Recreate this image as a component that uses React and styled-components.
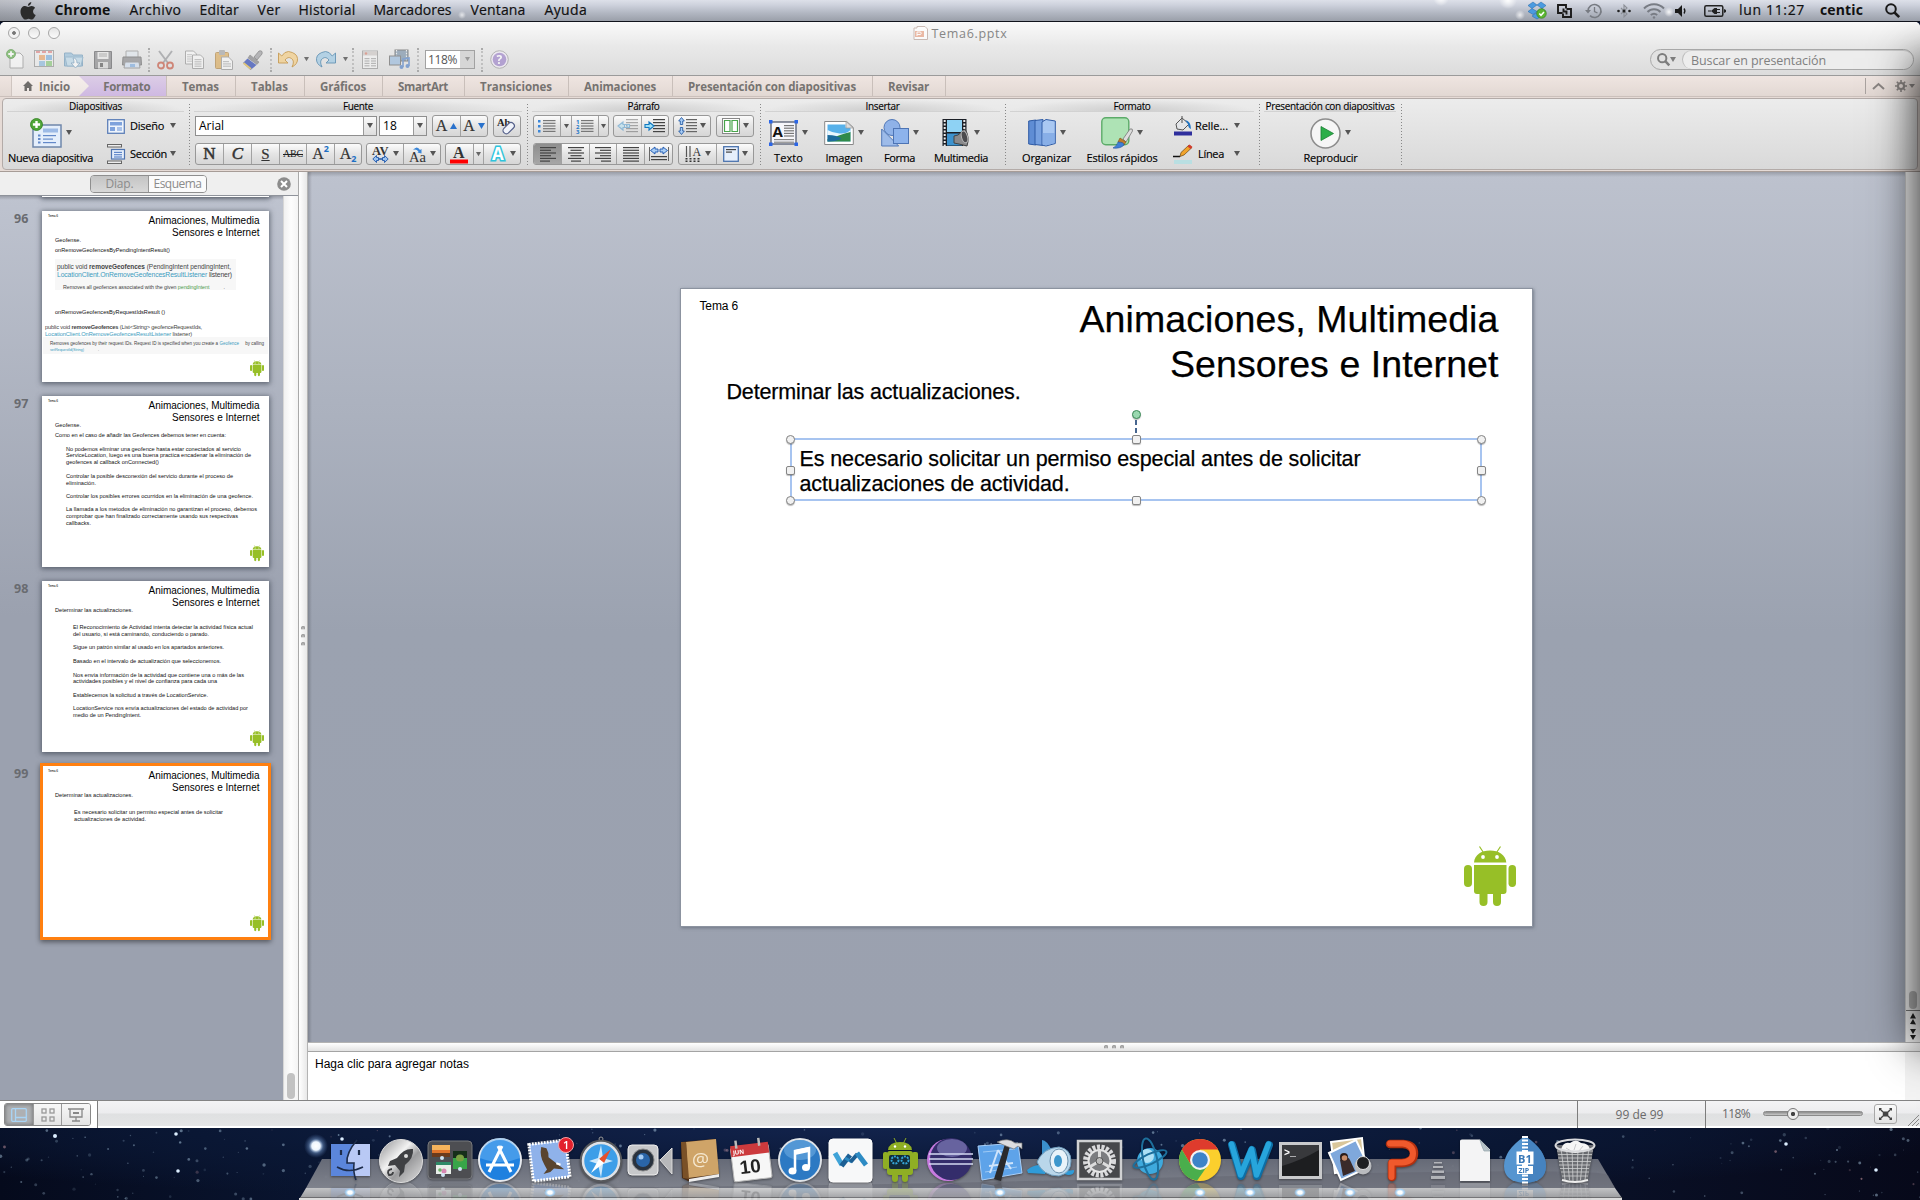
import React, { useLayoutEffect, useRef } from "react";
import styled, { createGlobalStyle, css } from "styled-components";

const UI = `"Open Sans", "Noto Sans", sans-serif`;
const ARIAL = `"Liberation Sans", Arial, sans-serif`;

const Global = createGlobalStyle`
  html, body { margin: 0; padding: 0; }
  body { width: 1920px; height: 1200px; overflow: hidden; background: #08112a; font-family: ${UI}; }
  *, *::before, *::after { box-sizing: border-box; }
  svg { display: block; flex: none; overflow: visible; }
`;

const Label = styled.span`
  display: inline-block;
  white-space: pre;
  flex: none;
`;

/* Text tracked to a given advance width. */
function Fit({ w, children, className }) {
  const ref = useRef(null);
  useLayoutEffect(() => {
    const el = ref.current;
    el.style.letterSpacing = "0px";
    const natural = el.getBoundingClientRect().width;
    el.style.letterSpacing = `${(w - natural) / el.textContent.length}px`;
  }, [w, children]);
  return <Label ref={ref} className={className}>{children}</Label>;
}

/* ---------- menu bar ---------- */
const Screen = styled.div`
  width: 1920px; height: 1200px; display: flex; flex-direction: column; overflow: hidden; position: relative;
`;
const MenuBar = styled.header`
  height: 22px; flex: none; display: flex; align-items: center; justify-content: space-between;
  border-bottom: 1px solid #10131c;
  background:
    radial-gradient(circle at 1441px -2px, #fff 0, transparent 8px),
    radial-gradient(circle at 1508px 0, #fff 0, transparent 9px),
    radial-gradient(circle at 1520px 15px, #ffffffc0 0, transparent 5px),
    radial-gradient(circle at 1669px 12px, #ffffffe0 0, transparent 5px),
    radial-gradient(circle at 462px 15px, #ffffffb0 0, transparent 4px),
    radial-gradient(circle at 165px 4px, #ffffff90 0, transparent 5px),
    linear-gradient(90deg, #60606040 0, transparent 130px),
    linear-gradient(#dde0e9 0, #cdd1dc 25%, #b3b8c3 60%, #9a9fa9 100%);
  padding: 0 20px 0 20px;
`;
const MenuGroup = styled.nav`display: flex; align-items: center; height: 21px;`;
const MenuItem = styled.div`
  font-size: 14px; line-height: 20px; color: #111; margin-left: ${(p) => p.$ml}px; padding-bottom: ${(p) => (p.$ic ? 0 : 1)}px;
  font-weight: ${(p) => (p.$bold ? 700 : 400)};
  -webkit-text-stroke: ${(p) => (p.$bold ? 0 : 0.2)}px #111;
`;

/* ---------- window chrome ---------- */
const Window = styled.main`
  height: 1106px; flex: none; display: flex; flex-direction: column; overflow: hidden;
  border-radius: 5px 5px 0 0; background: #fff; position: relative;
`;
const EdgeShadow = styled.div`
  position: absolute; left: 1920px; top: 40px; width: 300px; height: 980px;
  box-shadow: 0 0 42px 4px rgba(0, 0, 0, 0.82); pointer-events: none;
`;
const Header = styled.div`
  height: 54px; flex: none; background: linear-gradient(#fafafa, #e9e9e9 45%, #dcdcdc);
  border-bottom: 1px solid #9b9b9b; display: flex; flex-direction: column;
`;
const TitleRow = styled.div`height: 22px; display: grid; grid-template-columns: 300px 1fr 300px; align-items: center;`;
const Lights = styled.div`display: flex; gap: 8px; padding-left: 8px;`;
const Light = styled.i`
  width: 12px; height: 12px; border-radius: 50%; border: 1px solid #a6a6a6;
  background: ${(p) => (p.$dot ? "radial-gradient(circle, #777 0 1.5px, #f2f2f2 2.2px)" : "linear-gradient(#e4e4e4, #fbfbfb)")};
`;
const Title = styled.div`
  display: flex; justify-content: center; align-items: center; gap: 4px; color: #868686; font-size: 12.5px;
`;
const ToolRow = styled.div`height: 31px; display: flex; justify-content: space-between; padding-right: 6px;`;
const Tools = styled.div`display: flex; align-items: center; height: 31px;`;
const Cell = styled.div`
  width: ${(p) => p.$w}px; display: flex; justify-content: center; align-items: center; opacity: ${(p) => p.$o ?? 0.58};
`;
const Dots = styled.div`height: 24px; border-left: 2px dotted #aaa; width: 0; transform: scaleX(.6);`;
const Zoom = styled.div`
  width: 50px; height: 19px; border: 1px solid #a2a2a2; display: flex; background: #fff; color: #555;
  font-size: 12px; line-height: 17px; padding-left: 2px; justify-content: space-between; margin-left: 5px;
`;
const ZoomArrow = styled.div`width: 14px; background: #d6d6d6; display: grid; place-items: center;`;
const Search = styled.div`
  width: 264px; height: 21px; margin-top: 5px; border: 1px solid #a8a8a8; border-radius: 11px; display: flex;
  background: #e2e2e2; align-items: center; padding-left: 6px;
`;
const SearchInner = styled.div`
  margin-left: 6px; flex: 1; height: 19px; border-radius: 10px; border-left: 1px solid #bdbdbd; border-top: 1px solid #ccc;
  background: #ededed; padding-left: 8px; font-size: 12.5px; line-height: 19px; color: #808080;
`;

/* ---------- tabs ---------- */
const TabRow = styled.div`
  height: 21px; flex: none; display: flex; background: linear-gradient(#efe5e1, #e2d8d3);
  border-bottom: 1px solid #cbc0bb; padding-left: 11px; justify-content: space-between;
`;
const Tabs = styled.div`display: flex;`;
const Tab = styled.div`
  width: ${(p) => p.$w}px; height: 20px; display: flex; align-items: center; justify-content: center; gap: 6px;
  font-size: 11.5px; font-weight: 700; color: #767371; border-right: 1px solid #c9bfba;
  ${(p) => p.$kind === "home" && css`
    background: linear-gradient(#f6efec, #ece5e1); border-right: 0; border-left: 1px solid #cfc5c0; z-index: 1; justify-content: flex-start; padding-left: 11px;
    clip-path: polygon(0 0, calc(100% - 10px) 0, 100% 50%, calc(100% - 10px) 100%, 0 100%);
  `}
  ${(p) => p.$kind === "format" && css`
    background: linear-gradient(#dccde6, #cfb9e2); margin-left: -10px; padding-left: 9px;
  `}
`;
const TabTools = styled.div`
  display: flex; align-items: center; gap: 1px; border-left: 1px solid #aaa3a0; margin: 2px 5px 2px 0; padding-left: 6px;
`;

/* ---------- ribbon ---------- */
const RibbonWrap = styled.div`
  height: 75px; flex: none; background: #e6dbd6; padding: 1px 2px 1px 2px; border-bottom: 1px solid #a79c97;
`;
const Ribbon = styled.div`
  height: 72px; border: 1px solid #b3aba8; border-radius: 4px; display: flex;
  background: linear-gradient(#ececec, #d9d9d9);
`;
const Group = styled.section`
  width: ${(p) => p.$w}px; display: flex; flex-direction: column; flex: none;
  background: repeating-linear-gradient(#888 0 1px, transparent 1px 3px) right 5px / 1px 62px no-repeat;
`;
const GroupHead = styled.h2`
  margin: 0 6px 0 4px; height: 13px; font-size: 10px; line-height: 14px; font-weight: 400; color: #000; text-align: center;
  background: radial-gradient(ellipse at 50% 100%, #cccccc 0, transparent 70%);
  border-bottom: 1px solid #d2d2d2; -webkit-text-stroke: 0.1px #000;
`;
const GroupBody = styled.div`
  display: flex; flex-direction: ${(p) => (p.$rows ? "column" : "row")}; gap: ${(p) => (p.$rows ? 6 : 0)}px;
  padding: 3px 0 0 ${(p) => p.$pl ?? 0}px;
`;
const Row = styled.div`display: flex; height: 22px; align-items: center;`;
const Combo = styled.div`
  width: ${(p) => p.$w}px; height: 20px; border: 1px solid #8f8f8f; background: #fff; display: flex; justify-content: space-between;
  font-size: 12px; line-height: 18px; color: #000; padding-left: 3px; margin-right: ${(p) => p.$mr}px;
`;
const ComboArrow = styled.div`
  width: 13px; border-left: 1px solid #9a9a9a; background: linear-gradient(#fafafa, #dedede); display: grid; place-items: center;
`;
const Btns = styled.div`
  display: flex; height: 22px; border: 1px solid #989898; border-radius: 3px; margin-right: ${(p) => p.$mr ?? 4}px; overflow: hidden;
  background: linear-gradient(#fbfbfb, #e4e4e4 50%, #d6d6d6); flex: none;
`;
const Btn = styled.div`
  width: ${(p) => p.$w}px; display: flex; align-items: center; justify-content: center; gap: 3px;
  border-left: ${(p) => (p.$first ? 0 : 1)}px solid #a2a2a2;
  background: ${(p) => (p.$on ? "linear-gradient(#8e8e8e, #a6a6a6)" : "none")};
  > svg { opacity: ${(p) => (p.$dim ? 0.4 : 1)}; }
`;
const Glyph = styled.span`
  font-family: "Liberation Serif", serif; font-size: ${(p) => p.$s ?? 17}px; line-height: 20px; color: #333;
  font-style: ${(p) => (p.$i ? "italic" : "normal")};
  text-decoration: ${(p) => p.$d ?? "none"}; white-space: pre;
  -webkit-text-stroke: ${(p) => (p.$b ? 0.5 : 0.2)}px #333;
`;
const Struck = styled.span`
  font-family: "Liberation Serif", serif; font-size: 10px; line-height: 20px; color: #222;
  background: linear-gradient(#222, #222) 0 55% / 100% 1px no-repeat;
`;
const Script = styled.span`
  font-family: ${UI}; font-weight: 700; font-size: 9px; color: #1d6fc4; line-height: 10px;
  align-self: ${(p) => (p.$up ? "flex-start" : "flex-end")}; margin-left: -3px;
`;
const Big = styled.div`width: ${(p) => p.$w}px; padding-top: 1px; display: flex; flex-direction: column; align-items: center;`;
const BigIcon = styled.div`height: 34px; display: flex; align-items: center; gap: 4px;`;
const BigLabel = styled.div`font-size: 11px; line-height: 16px; color: #000; display: flex; justify-content: center; -webkit-text-stroke: 0.15px #000;`;
const Side = styled.div`display: flex; flex-direction: column; gap: 6px; padding-left: ${(p) => p.$pl}px;`;
const SideRow = styled.div`
  display: flex; height: 22px; align-items: center; font-size: 11px; color: #000; -webkit-text-stroke: 0.15px #000;
  width: ${(p) => p.$w}px; justify-content: space-between;
`;
const SideText = styled.div`flex: 1; padding-left: ${(p) => p.$pl ?? 5}px; line-height: 16px;`;

/* ---------- work area ---------- */
const Work = styled.div`height: 928px; flex: none; display: flex;`;
const Left = styled.aside`width: 299px; flex: none; display: flex; flex-direction: column; border-right: 1px solid #a9a9a9;`;
const LeftHead = styled.div`
  height: 24px; flex: none; background: #efefef; border-bottom: 1px solid #8f939b; display: flex; align-items: center; padding-left: 90px; justify-content: space-between; padding-right: 7px;
`;
const Seg = styled.div`
  display: flex; width: 117px; height: 18px; border: 1px solid #8f8f8f; border-radius: 4px; overflow: hidden; font-size: 12px; line-height: 16px; color: #8b8b8b;
`;
const SegItem = styled.div`
  flex: 1; display: flex; justify-content: center; background: ${(p) => (p.$on ? "linear-gradient(#c4c4c4, #d8d8d8)" : "#fbfbfb")};
  border-left: ${(p) => (p.$on ? 0 : 1)}px solid #999;
`;
const LeftBody = styled.div`flex: 1; display: flex; overflow: hidden;`;
const Strip = styled.div`
  width: 283px; flex: none; position: relative; overflow: hidden;
  background: linear-gradient(#00000030, transparent 4px), linear-gradient(#bec3cf, #9ba1af 420px);
`;
const Track = styled.div`
  flex: 1; border-left: 1px solid #d6d6d6; background: linear-gradient(90deg, #f0f0f0, #fdfdfd 50%, #f4f4f4);
  display: flex; flex-direction: column; justify-content: flex-end; align-items: center; padding-bottom: 1px;
`;
const TrackThumb = styled.div`width: 8px; height: ${(p) => p.$h}px; border-radius: 4px; background: ${(p) => p.$c ?? "#c2c2c2"};`;
const VSplit = styled.div`
  width: 9px; flex: none; background: linear-gradient(90deg, #fff, #e8e8e8); border-right: 1px solid #b3b3b3; display: flex; flex-direction: column;
  align-items: center; gap: 4px; padding-top: 454px;
`;
const HSplit = styled.div`
  height: 10px; flex: none; background: linear-gradient(#fff, #e3e3e3); border-top: 1px solid #b3b3b3; border-bottom: 1px solid #a4a4a4; display: flex; gap: 4px;
  justify-content: center; align-items: center;
`;
const Dot = styled.i`width: 4px; height: 4px; border-radius: 50%; background: #b2b2b2; border: 1px solid #999; border-bottom-color: #ddd;`;
const Right = styled.div`flex: 1; min-width: 0; display: flex; flex-direction: column;`;
const StageRow = styled.div`height: 870px; flex: none; display: flex;`;
const Stage = styled.div`
  width: 1597px; flex: none; padding: 117px 0 0 373px;
  background: linear-gradient(#00000030, transparent 5px), linear-gradient(90deg, #00000030, transparent 4px), linear-gradient(#bdc2ce, #9ba2b0 460px, #9ba1af);
`;
const RightTrack = styled.div`
  flex: 1; min-width: 0; background: #f1f1f1; border-left: 1px solid #ccc; display: flex; flex-direction: column; align-items: center; justify-content: flex-end;
`;
const Pagers = styled.div`margin-top: 1px; height: 32px; width: 14px; border-top: 1px solid #777; display: flex; justify-content: center;`;
const Notes = styled.div`
  flex: 1; background: #fff; font-family: ${ARIAL}; font-size: 12px; line-height: 16px; color: #000; padding: 4px 0 0 7px;
  border-right: 15px solid #f3f3f3; 
`;

/* ---------- slides ---------- */
const Slide = styled.div`
  position: relative; width: ${(p) => p.$w}px; height: ${(p) => p.$h}px; background: #fff; box-shadow: ${(p) => p.$sh}; font-family: ${ARIAL};
`;
const TextLine = styled.div`
  position: absolute; line-height: 0; white-space: pre; font-size: ${(p) => p.$s}px; left: ${(p) => p.$x}px;
  top: ${(p) => p.$y - p.$s * 0.3465}px; color: ${(p) => p.$c ?? "#000"}; height: 0;
  -webkit-text-stroke: ${(p) => (p.$s > 15 ? 0.25 : 0)}px #000;
`;
const Inline = styled.span`color: ${(p) => p.$c ?? "inherit"}; font-weight: ${(p) => (p.$b ? 700 : 400)};`;
const Shade = styled.div`
  position: absolute; left: ${(p) => p.$x}px; top: ${(p) => p.$y}px; width: ${(p) => p.$w}px; height: ${(p) => p.$h}px; background: #f7f7f7;
`;
const Selection = styled.div`
  position: absolute; left: 109px; top: 149px; width: 692px; height: 63px; border: 2px solid #a7c4f0;
`;
const Handle = styled.i`
  position: absolute; width: 9px; height: 9px; left: ${(p) => p.$x}px; top: ${(p) => p.$y}px; background: ${(p) => p.$c ?? "#f1f1f1"};
  border: 1px solid ${(p) => p.$b ?? "#858585"}; border-radius: ${(p) => (p.$round ? "50%" : "2px")}; box-shadow: 0 1px 1px #0004;
`;
const Stem = styled.i`
  position: absolute; left: 343px; top: -20px; height: 14px; width: 2px;
  background: linear-gradient(#46658f 0 5px, transparent 5px 8px, #46658f 8px 13px, transparent 13px);
`;
const BotSpot = styled.div`position: absolute; left: ${(p) => p.$x}px; top: ${(p) => p.$y}px;`;
const Thumb = styled.div`position: absolute; left: ${(p) => p.$x ?? 42}px; top: ${(p) => p.$y}px;`;
const Ring = styled.div`position: absolute; inset: -3px -2px; border: 3px solid #ff8010; box-shadow: ${(p) => (p.$sh ? "0 2px 5px #0007" : "none")};`;
const Num = styled.div`
  position: absolute; left: 14px; top: ${(p) => p.$y}px; font-size: 12.5px; line-height: 16px; font-weight: 700; color: #696b70;
`;

/* ---------- status bar ---------- */
const Status = styled.footer`
  height: 28px; flex: none; border-top: 1px solid #838383; display: flex; border-bottom: 2px solid #fff;
  background: linear-gradient(#f4f4f5, #ececee 48%, #dfe0e1 52%, #e4e5e6); color: #6a6a6a; font-size: 12px;
`;
const Views = styled.div`width: 98px; flex: none; background: #fff; border-right: 1px solid #7d7d7d; padding: 2px 0 0 4px; margin-bottom: -2px;`;
const ViewSet = styled.div`
  width: 87px; height: 23px; display: grid; grid-template-columns: 28px 28px 29px; border: 1px solid #888; border-radius: 3px; overflow: hidden;
`;
const View = styled.div`
  display: grid; place-items: center; background: ${(p) => (p.$on ? "#aeb0b3" : "linear-gradient(#f7f7f7,#e4e4e4)")};
  border-left: ${(p) => (p.$on ? 0 : 1)}px solid #999; box-shadow: ${(p) => (p.$on ? "inset 0 0 4px #666" : "none")};
`;
const Fill = styled.div`flex: 1; border-right: 1px solid #7d7d7d; margin-bottom: -2px;`;
const Count = styled.div`width: 128px; flex: none; display: grid; place-items: center; border-right: 1px solid #7d7d7d; margin-bottom: -2px; padding: 0 4px 1px 0;`;
const ZoomArea = styled.div`width: 214px; flex: none; display: flex; align-items: center; padding-left: 16px;`;
const Slider = styled.div`
  width: 100px; height: 5px; border-radius: 3px; background: linear-gradient(#8c8c8c, #c8c8c8); border: 1px solid #8a8a8a; margin-left: 13px;
  display: flex; align-items: center; padding-left: 23px;
`;
const Knob = styled.i`width: 12px; height: 12px; flex: none; border-radius: 50%; border: 1px solid #777; background: radial-gradient(circle, #444 0 1.8px, #eee 2.5px);`;
const FullBtn = styled.div`
  width: 23px; height: 20px; margin-left: 11px; border: 1px solid #a8a8a8; border-radius: 3px; background: linear-gradient(#fafafa, #e2e2e2); display: grid; place-items: center;
`;
const Grip = styled.div`margin: 14px 0 0 11px;`;

/* ---------- desktop and dock ---------- */
const Desktop = styled.div`
  height: 72px; position: relative; overflow: hidden;
  background: radial-gradient(ellipse at 45% 0, #12234c 0, #0a1734 45%, transparent 75%), linear-gradient(90deg, #050a1c, #0a1734 20%, #0a132c 75%, #07091a);
`;
const Backdrop = styled.div`position: absolute; inset: 0;`;
const Dock = styled.div`position: relative; display: flex; padding-left: 325px; height: 72px;`;
const DockItem = styled.div`
  width: ${(p) => p.$w ?? 50}px; height: 72px; display: flex; flex-direction: column; align-items: center; padding-top: 8px; position: relative;
  > svg { -webkit-box-reflect: below 0 linear-gradient(transparent 55%, rgba(0,0,0,.3)); filter: drop-shadow(0 1px 1px #0006); }
`;
const Glow = styled.i`
  position: absolute; bottom: 3px; left: 19px; width: 12px; height: 9px; border-radius: 50%;
  background: radial-gradient(ellipse, #fff 0 25%, #9fd4ffcc 50%, transparent 70%);
`;

/* ---------- drawings ---------- */
const Tri = ({ c = "#555", up, w = 6 }) => (
  <svg width={w} height={w * 0.85} viewBox="0 0 6 5"><path d={up ? "M0 5h6L3 0z" : "M0 0h6L3 5z"} fill={c} /></svg>
);
const Bot = ({ w }) => (
  <svg width={w} height={w * 60 / 52} viewBox="0 0 52 60" fill="#97bf27">
    <path d="M15.500 .5l3.600 5.500M36.500 .5l-3.600 5.500" stroke="#97bf27" strokeWidth="1.200" />
    <path d="M10 16.500C10.500 9 17 4.500 26 4.500S41.500 9 42.300 16.500z" />
    <circle cx="19" cy="11" r="1.900" fill="#fff" /><circle cx="33" cy="11" r="1.900" fill="#fff" />
    <path d="M10 19h32.500v26a3 3 0 0 1-3 3h-26.500a3 3 0 0 1-3-3z" />
    <rect x="0" y="19" width="8" height="22" rx="4" /><rect x="44.500" y="19" width="7.500" height="22" rx="3.700" />
    <path d="M15.500 46h8v10a4 4 0 0 1-8 0zM29 46h8v10a4 4 0 0 1-8 0z" />
  </svg>
);
const S = ({ w = 20, h = 20, children, ...r }) => <svg width={w} height={h} viewBox={`0 0 ${w} ${h}`} fill="none" {...r}>{children}</svg>;
const Plus = ({ x, y, r = 4 }) => (
  <g><circle cx={x} cy={y} r={r} fill="#4fa638" stroke="#2f7d1e" strokeWidth=".8" /><path d={`M${x - r * 0.6} ${y}h${r * 1.2}M${x} ${y - r * 0.6}v${r * 1.2}`} stroke="#fff" strokeWidth={r * 0.4} /></g>
);
const Lines = ({ x = 0, y = 0, ws, gap = 3, c = "#444", align = "l", full = 16 }) => (
  <g fill={c}>{ws.map((w, i) => <rect key={i} x={x + (align === "c" ? (full - w) / 2 : align === "r" ? full - w : 0)} y={y + i * gap} width={w} height="1.200" />)}</g>
);

const Apple = () => (
  <S w={16} h={18} fill="#2b2b2b"><path d="M11.300 0c.2 1.700-1.500 3.900-3.400 3.800C7.700 2.100 9.500.3 11.300 0zM8.200 5c.8 0 1.900-.9 3.500-.9 1.300 0 2.600.7 3.400 1.900-3 1.800-2.500 5.800.6 7-.7 2-2.400 4.600-3.900 4.600-1.200 0-1.700-.8-3.200-.8s-2 .8-3.200.8C3.400 17.600.5 13.700.5 9.800c0-3.700 2.300-5.700 4.500-5.700C6.600 4.100 7.400 5 8.200 5z" /></S>
);
const Dropbox = () => (
  <S w={20} h={17}><path d="M5 0L0 3.500 4 6.500 9 3zM13 0L9 3l5 3.500L18 3.500zM4 6.500L0 9.500 5 12.500l4-3zM14 6.500L9 9.500l4 3 5-3zM4.500 13.500v1L9 17l4.500-2.500v-1L9 10.500z" fill="#4b9be0" stroke="#2367a8" strokeWidth=".5" /><circle cx="13.500" cy="11.500" r="4.800" fill="#5cb531" stroke="#2e7d14" strokeWidth=".6" /><path d="M11.300 11.500l1.700 1.800 3-3.300" stroke="#fff" strokeWidth="1.500" /></S>
);
const Overlap = () => <S w={15} h={14}><path d="M9 4.500V1H1v8h4.500M9.500 5H14v8H6V9.500M6.500 4.500v3h3v3" stroke="#1a1a1a" strokeWidth="1.900" /></S>;
const ClockIc = () => <S w={17} h={16}><path d="M3 8a6.500 6.500 0 1 1 2 4.700" stroke="#777b82" strokeWidth="1.600" /><path d="M0 7h6L3 10.500z" fill="#777b82" /><path d="M9.500 4v4.500l3 1.500" stroke="#777b82" strokeWidth="1.300" /></S>;
const Bt = () => <S w={14} h={14}><path d="M4 4l6 6-3 3V1l3 3-6 6" stroke="#8b8f96" strokeWidth="1.100" /><circle cx="1.500" cy="7" r="1.300" fill="#222" /><circle cx="7" cy="7" r="1.500" fill="#222" /><circle cx="12.500" cy="7" r="1.300" fill="#222" /></S>;
const Wifi = () => <S w={22} h={16} stroke="#787c84" strokeWidth="2"><path d="M1 5.500a14 14 0 0 1 20 0M4.500 9a9 9 0 0 1 13 0M7.800 12a5 5 0 0 1 6.400 0" /><circle cx="11" cy="14.500" r="1" fill="#787c84" strokeWidth=".5" /></S>;
const Sound = () => <S w={11} h={12}><path d="M0 4h3l4-4v12L3 8H0z" fill="#1a1a1a" /><path d="M9 3.500q1.800 2.500 0 5" stroke="#1a1a1a" strokeWidth="1.300" /></S>;
const Batt = () => <S w={22} h={12}><rect x=".8" y=".8" width="18" height="10.400" rx="1.500" stroke="#222" strokeWidth="1.500" /><path d="M20 4v4l2-1V5z" fill="#222" /><path d="M4 6h3M13 4.500h3M13 7.500h3" stroke="#222" strokeWidth="1.200" /><path d="M13 3v6h-2.500L7 6l3.500-3z" fill="#222" /></S>;
const Mag = ({ s = 15, c = "#1a1a1a", sw = 2 }) => <svg width={s} height={s} viewBox="0 0 15 15" fill="none"><circle cx="6" cy="6" r="4.800" stroke={c} strokeWidth={sw} /><path d="M9.500 9.500l4.700 4.700" stroke={c} strokeWidth={sw + 0.6} /></svg>;

const PptFile = () => <S w={15} h={14} opacity=".7"><path d="M1 2h3V.5h8l2.500 2.500v10.500H1z" fill="#fff" stroke="#b9a39a" /><rect x="2" y="5" width="9" height="6" fill="#e8a184" /><path d="M4 10V6h3a1 1 0 0 1 0 2.500H4" stroke="#fff" /></S>;
const TNew = () => <S w={18}><path d="M4 3h10l3 3v12H4z" fill="#fcfcfc" stroke="#888" /><Plus x={5} y={4} r={4.500} /></S>;
const TGrid = () => <S w={20}><rect x=".5" y=".5" width="19" height="16" fill="#eee" stroke="#888" /><path d="M2 2h4M8 2h4M14 2h4" stroke="#d77" strokeWidth="2" /><rect x="5" y="5" width="6" height="5" fill="#e89a55" /><rect x="12" y="5" width="6" height="5" fill="#6aa7dc" /><rect x="5" y="11" width="6" height="5" fill="#7fb4dd" /><rect x="12" y="11" width="6" height="5" fill="#7cc36a" /></S>;
const TFolder = () => <S w={20} h={18}><path d="M.5 2h7l1.500 2h9.500v11H.5z" fill="#8db9d8" stroke="#5d8fb4" /><path d="M1 6h18l-2 9H3z" fill="#b5d6ea" stroke="#6d9dbf" /><path d="M9 7q4 0 4 5h3l-4.500 5L7 12h3q0-3-1-5z" fill="#fff" stroke="#5487ad" strokeWidth=".8" /></S>;
const TSave = () => <S w={18} h={18}><path d="M.5.5h17v17H.5z" fill="#7b7b7e" stroke="#4b4b4e" /><rect x="3.500" y="1" width="11" height="7" fill="#e9e9e9" /><path d="M5 3h8M5 5h8" stroke="#888" /><rect x="4" y="11" width="10" height="6.500" fill="#d5d5d5" /><rect x="6" y="12" width="3" height="4" fill="#444" /></S>;
const TPrint = () => <S w={20} h={18}><path d="M4 0h12v7H4z" fill="#dfe6ee" stroke="#888" /><path d="M1 6h18l.5 8H.5z" fill="#7c7c80" stroke="#555" /><path d="M3 11h14l1 6H2z" fill="#cfdff3" stroke="#777" /><rect x="8" y="13" width="5" height="3" fill="#6fa4e0" /></S>;
const TCut = () => <S w={17}><path d="M2 1l9 12M15 1L6 13" stroke="#8a8c90" strokeWidth="2" /><circle cx="4" cy="15.500" r="3" stroke="#c2452d" strokeWidth="1.800" /><circle cx="13" cy="15.500" r="3" stroke="#c2452d" strokeWidth="1.800" /></S>;
const TCopy = () => <S w={19} h={19}><path d="M.5 1h8l3 3v10H.5z" fill="#fafafa" stroke="#888" /><path d="M7.500 5h8l3 3v10.500h-11z" fill="#fafafa" stroke="#888" /><Lines x={9.500} y={9} ws={[7, 7, 7, 7]} gap={2.200} c="#aaa" /><Lines x={2} y={4} ws={[5, 5, 5, 5]} gap={2.200} c="#bbb" /></S>;
const TPaste = () => <S w={18}><rect x=".5" y="2.500" width="13" height="16" rx="1" fill="#d9a34a" stroke="#a8762a" /><rect x="4" y="0" width="6" height="5" rx="1" fill="#999" /><path d="M6.500 7h7l4 4v8.500h-11z" fill="#fafafa" stroke="#888" /><Lines x={8} y={11} ws={[6, 8, 8]} gap={2.300} c="#aaa" /></S>;
const TBrush = () => <S w={20}><path d="M11 7l5-6q4-1 3 3l-5 6z" fill="#a5a5a8" stroke="#666" strokeWidth=".7" /><path d="M7 5l9 7-2 2.500-9-6.500z" fill="#8d8d90" stroke="#666" strokeWidth=".5" /><path d="M4.500 8.500l9 6.500-6 5L0 13z" fill="#3e55b8" /><path d="M.5 13l7.500 6" stroke="#e0be5a" strokeWidth="1.800" /></S>;
const Arc = ({ flip, c, d }) => <S w={20} h={18} transform={flip ? "scale(-1,1)" : undefined}><path d="M.5 2v10H10L7 9q3-4 6.500-1.500T14 16q6-3 5.500-8.500T10.500.5Q6.500.5 3.800 5z" fill={c} stroke={d} strokeWidth=".9" /></S>;
const TForm = () => <S w={16}><rect x=".5" y="1" width="15" height="17.500" fill="#f4f4f4" stroke="#8a8a8a" /><rect x="1" y="1.500" width="14" height="4" fill="#c9c2c0" /><circle cx="4" cy="3.500" r="1.200" fill="#d56f5a" /><Lines x={2.500} y={8} ws={[5, 5, 5, 5]} gap={2.400} c="#999" /><Lines x={9} y={8} ws={[5, 5, 5, 5]} gap={2.400} c="#999" /></S>;
const TMedia = () => <S w={21}><rect x="6" y="0" width="13" height="11" fill="#69849e" stroke="#444" /><path d="M7.500 0v11M17.500 0v11" stroke="#eee" strokeWidth="1.200" strokeDasharray="1.500 1.200" /><rect x=".5" y="6" width="11" height="9" fill="#8fb5dc" stroke="#555" /><path d="M14 17V9l6-1v8" stroke="#3f74c2" strokeWidth="1.600" /><circle cx="12.500" cy="17" r="2" fill="#3f74c2" /><circle cx="18.500" cy="16" r="2" fill="#3f74c2" /></S>;

const NewSlide = () => (
  <S w={32} h={31}><rect x="3" y="7" width="28" height="22" fill="#e4eefb" stroke="#6f87ab" strokeWidth="1.500" /><rect x="13" y="10.500" width="15" height="4" fill="#9cbae6" /><Lines x={13} y={17} ws={[13, 10, 13]} gap={3.500} c="#6389c9" /><path d="M8 17.500h2.500M8 21h2.500M8 24.500h2.500" stroke="#6389c9" strokeWidth="2" /><Plus x={6.500} y={6.500} r={6} /></S>
);
const LayoutIc = () => <S w={18} h={15}><rect x=".7" y=".7" width="16.600" height="13.600" fill="#eef4fc" stroke="#5f80b8" strokeWidth="1.300" /><rect x="3" y="3" width="12" height="3.500" fill="#7ea2dc" /><rect x="3" y="8" width="5" height="4" fill="#7ea2dc" /><rect x="10" y="8" width="5" height="4" fill="#a9c2ea" /></S>;
const SectionIc = () => <S w={18} h={20}><rect x=".5" y=".5" width="14" height="2.500" fill="#eee" stroke="#666" /><rect x=".5" y="17" width="14" height="2.500" fill="#eee" stroke="#666" /><rect x="4.500" y="5.500" width="13" height="9.500" fill="#e4eefb" stroke="#4f74b0" strokeWidth="1.200" /><Lines x={7} y={7.800} ws={[8, 8, 8]} gap={2.300} c="#5f86c9" /></S>;
const Bullets = ({ num }) => (
  <S w={18} h={15}>{num ? <g fill="#2478c8" fontFamily="Open Sans" fontWeight="700" fontSize="6"><text x="0" y="4.800">1</text><text x="0" y="10">2</text><text x="0" y="15">3</text></g> : <g fill="#3a86d8"><rect width="2.500" height="2.500" y="1" /><rect width="2.500" height="2.500" y="6" /><rect width="2.500" height="2.500" y="11" /></g>}<Lines x={5} y={1} ws={[12.500, 12.500, 12.500, 12.500, 12.500]} gap={2.700} c="#777" /></S>
);
const Indent = ({ out }) => <S w={20} h={14}><Lines x={8} y={0} ws={[12, 12, 12, 12, 12]} gap={3} /><path d={out ? "M6.500 5.500v3h5v-3zM0 7l5-4v2.500h4v3H5V11z" : "M9 7L4 3v2.500H0v3h4V11z"} fill="#9fe0f7" stroke="#1278c0" strokeWidth="1.100" /></S>;
const Spacing = () => <S w={19} h={18}><path d="M3.500.5L.7 4h1.600v3.500h2.400V4h1.600zM3.500 17.500L.7 14h1.600v-3.500h2.400V14h1.600z" fill="#a9cdf5" stroke="#285fa8" strokeWidth=".9" /><Lines x={8} y={2} ws={[11, 11, 11, 11, 11]} gap={3} c="#666" /></S>;
const Columns = () => <S w={18} h={16}><rect x=".5" y=".5" width="17" height="15" fill="#fff" stroke="#888" /><path d="M2.500 2.500h5.500v11H2.500zM10 2.500h5.500v11H10z" stroke="#4aa54c" strokeWidth="1.200" /></S>;
const Align = ({ a }) => {
  const ws = a === "j" ? [16, 16, 16, 16, 16, 16] : [16, 11, 16, 11, 16, 10];
  return <S w={16} h={15}><Lines y={0} ws={ws} gap={2.700} align={a} /></S>;
};
const Distrib = () => <S w={20} h={16}><path d="M.5 1v14M19.500 1v14" stroke="#666" /><path d="M6 1L1.500 4.500 6 8V6h3V3H6zM14 1l4.500 3.500L14 8V6h-3V3h3z" fill="#a9cdf5" stroke="#1a56b0" strokeWidth=".9" /><Lines x={2} y={10} ws={[16, 16]} gap={3} /></S>;
const TextDir = () => <S w={17} h={16}><path d="M1.500 0v11M5 0v11" stroke="#555" strokeWidth="1.200" /><text x="7.500" y="10" fontFamily="Liberation Serif" fontSize="12" fill="#333">A</text><path d="M1.500 12v4M5.500 12v4M9.500 12v4M13.500 12v4" stroke="#333" strokeWidth="2" strokeDasharray="1.500 1" /></S>;
const AlignBox = () => <S w={16} h={16}><rect x=".7" y=".7" width="14.600" height="14.600" fill="#e6effc" stroke="#4b73ae" strokeWidth="1.300" /><Lines x={3} y={3} ws={[10, 6]} gap={2.500} /></S>;
const AV = () => <S w={18} h={18}><text x="0" y="9.500" fontFamily="Liberation Serif" fontSize="12.500" fontWeight="700" fill="#333">AV</text><path d="M4.500 10.500L.8 14 4.500 17.500V15.500h2v-3h-2zM12.500 10.500L16.200 14l-3.700 3.500V15.500h-2v-3h2z" fill="#9cc4f2" stroke="#1d56aa" strokeWidth=".9" /><path d="M6.500 14h4" stroke="#1d56aa" strokeWidth="1.500" /></S>;
const Aa = () => <S w={18} h={17}><text x="0" y="16" fontFamily="Liberation Serif" fontSize="14.500" fill="#333">Aa</text><path d="M4 4q4-5 7 0l1.500-1v4.500l-4-1 1-1Q7 2.500 4 4z" fill="#3a86d8" /></S>;
const TextIc = () => <S w={29} h={27}><rect x="2" y="2" width="25" height="22" fill="#f6f6fa" stroke="#555c70" strokeWidth="1.300" /><text x="3.500" y="17" fontFamily="Open Sans" fontWeight="700" fontSize="15" fill="#111">A</text><Lines x={15} y={5} ws={[10, 10, 10, 10, 10]} gap={2.600} c="#777" /><Lines x={5} y={19} ws={[20, 20]} gap={2.600} c="#888" /><g fill="#2b66e8"><rect width="3.500" height="3.500" /><rect x="25.500" width="3.500" height="3.500" /><rect y="22.500" width="3.500" height="3.500" /><rect x="25.500" y="22.500" width="3.500" height="3.500" /></g></S>;
const ImageIc = () => <S w={30} h={26}><path d="M.7 1.500h22l6.600 6v17H.7z" fill="#fff" stroke="#888" /><path d="M3.500 4.500h18v3h5V21.500h-23z" fill="#57b1ea" /><path d="M3.500 10q5 3 12 3.500T26.500 10v11.500h-23z" fill="#e9f6fd" /><path d="M26.500 12q-12 3-20 7l-3 0v2.500h23z" fill="#2f8a4a" /><path d="M3.500 15q10 0 14 4-8 3-14 2.500z" fill="#1d6b9c" /><path d="M22 1.500V8h7z" fill="#ddd" stroke="#999" strokeWidth=".7" /></S>;
const ShapeIc = () => <S w={28} h={28}><circle cx="11" cy="8.500" r="8" fill="#8fb2e8" stroke="#5279b8" /><path d="M.7 10v17h17z" fill="#9dbbe9" stroke="#5279b8" /><rect x="12.500" y="9.500" width="15" height="15" fill="#8db3ec" stroke="#4d74b4" /></S>;
const MediaIc = () => <S w={28} h={28}><rect x=".5" y="0" width="24" height="27" fill="#1b1f26" /><rect x="5" y="1" width="15" height="12" fill="#8ed2f4" /><rect x="5" y="14.500" width="15" height="12" fill="#3d93cf" /><path d="M2.700 1v26M22.300 1v26" stroke="#eee" strokeWidth="2" strokeDasharray="2 1.500" /><path d="M12 17l4-1 7-6q5 8 2 17l-8-2-5-1z" fill="#8a8a8c" stroke="#444" /><ellipse cx="22.500" cy="18" rx="3" ry="6" fill="#4b4b4e" stroke="#bbb" transform="rotate(-15 22 18)" /></S>;
const ArrangeIc = () => <S w={28} h={28}><path d="M.7 2l7-1v25l-7-1z" fill="#5f8dd4" stroke="#2f5ba5" /><path d="M7 1.500l8-1v26l-8-1z" fill="#77a1e0" stroke="#2f5ba5" /><path d="M14 3l4-2.500 9.300 1.500v22.500L18 27l-4-1z" fill="#a9c8f2" stroke="#2f5ba5" /><path d="M14.500 14h12.500v10L18 26.500l-3.500-1z" fill="#7aa4e2" opacity=".7" /></S>;
const StylesIc = () => <S w={32} h={32}><rect x=".8" y=".8" width="27" height="27" rx="4" fill="#aee3b5" stroke="#5cab69" strokeWidth="1.400" /><path d="M22 22l7-10q3-1 2.500 2L25 25z" fill="#ddd" stroke="#777" strokeWidth=".8" /><path d="M19 21l6 4-2 3-6-3z" fill="#c17d2c" stroke="#7d4b12" strokeWidth=".6" /><path d="M17 25q6 0 6 3-4 4-11 3 4-2 5-6z" fill="#3f7fd6" stroke="#24539a" strokeWidth=".6" /></S>;
const FillIc = () => <S w={19} h={20}><path d="M3 8l6-6 7 6-6 6-6-1z" fill="#e3e5e8" stroke="#555" /><path d="M9 0v7" stroke="#666" strokeWidth="1.200" /><path d="M12 4q6 1 6 9-3-1-3-5z" fill="#1f74c4" /><rect x="1" y="15.500" width="18" height="4" fill="#2f2f9d" /></S>;
const LineIc = () => <S w={20} h={20}><path d="M0 12.500h7" stroke="#111" strokeWidth="1.500" /><path d="M7 12.500l1-4L16 1l3 2.500L11 11z" fill="#f1a32b" stroke="#6b430e" strokeWidth=".7" /><path d="M14.500 2.500L16.500.5l3 2.500-2 2z" fill="#d23b2e" /><rect x="1" y="16" width="18" height="4" fill="#b9dfe2" /></S>;
const PlayIc = () => <S w={31} h={31}><circle cx="15.500" cy="15.500" r="14.500" fill="#f6f6f6" stroke="#8d8d8d" strokeWidth="1.600" /><path d="M11 8.500v14l12.500-7z" fill="#2cae4a" stroke="#1b7f32" strokeWidth=".8" /></S>;

/* stars */
const stars = (() => {
  let s = 41;
  const rnd = () => ((s = (s * 16807) % 2147483647) / 2147483647);
  return Array.from({ length: 330 }, () => ({ x: rnd() * 1920, y: rnd() * 72, r: 0.5 + rnd() * 1.2, o: 0.12 + rnd() * 0.42, c: rnd() > 0.9 ? "#e0a8b0" : "#a9c6dd" }));
})();
const Sky = () => (
  <svg width="1920" height="72" viewBox="0 0 1920 72">
    <defs>
      <linearGradient id="shelf" x1="0" y1="0" x2="0" y2="1"><stop offset="0" stopColor="#6a6e7a" /><stop offset="1" stopColor="#858891" /></linearGradient>
      <linearGradient id="lip" x1="0" y1="0" x2="0" y2="1"><stop offset="0" stopColor="#c2c3c5" /><stop offset="1" stopColor="#9b9c9f" /></linearGradient>
      <radialGradient id="flare"><stop offset="0" stopColor="#fff" /><stop offset=".35" stopColor="#eef6ff" /><stop offset=".6" stopColor="#8fb8ee" stopOpacity=".4" /><stop offset="1" stopColor="#5c86c8" stopOpacity="0" /></radialGradient>
    </defs>
    {stars.map((p, i) => <circle key={i} cx={p.x} cy={p.y} r={p.r} fill={p.c} opacity={p.o} />)}
    <circle cx="316" cy="18" r="12" fill="url(#flare)" />
    <g fill="#dceeff"><circle cx="55" cy="8" r="2" /><circle cx="176" cy="6" r="1.800" /><circle cx="178" cy="43" r="1.800" /><circle cx="342" cy="11" r="1.800" /><circle cx="1786" cy="16" r="1.800" /><circle cx="1876" cy="42" r="1.800" /></g>
    <path d="M322 31H1598L1615 60H306z" fill="url(#shelf)" opacity=".95" />
    <path d="M306 60Q700 62 1150 50T1608 47L1615 60z" fill="#5f626c" opacity=".45" />
    <path d="M306 60H1615L1622 70H300z" fill="url(#lip)" />
    <path d="M299 70H1622V72H299z" fill="#dcdcdc" /><path d="M300 69.500H1622" stroke="#6d6d70" />
  </svg>
);

/* dock icons are drawn in a 46x46 box */
const D = ({ children }) => <svg width="46" height="46" viewBox="0 0 46 46" fill="none">{children}</svg>;
const dock = [
  { glow: true, el: <D><rect x="4" y="8" width="39" height="32" fill="#b9c9f5" /><path d="M4 8h22q-7 12-5 19h5l1 13H4z" fill="#5b86dc" /><path d="M30 4Q19 17 20 27h7q-1 10 2 17M10 31q12 7 26 0" stroke="#1d2c4a" strokeWidth="1.600" /><path d="M14 14v5M32 14v5" stroke="#1d2c4a" strokeWidth="2.200" /></D> },
  { el: <D><defs><linearGradient id="mt" x1="0" y1="0" x2="1" y2="1"><stop offset="0" stopColor="#8e8e90" /><stop offset=".4" stopColor="#f2f2f2" /><stop offset=".6" stopColor="#9b9b9d" /><stop offset="1" stopColor="#e3e3e3" /></linearGradient></defs><circle cx="24" cy="25" r="21.500" fill="url(#mt)" stroke="#ddd" /><path d="M36 13q-9-1-16 9l-7 3-2 5 7-1 5 6-1 6 5-5 1-7q9-7 8-16z" fill="#3f4043" /><circle cx="29" cy="20" r="2" fill="#ddd" /><path d="M15 33q-6 1-3 6 4 0 4-3" stroke="#3f4043" strokeWidth="1.800" /></D> },
  { el: <D><rect x="1" y="5" width="44" height="38" rx="4" fill="#4d4e52" stroke="#77787c" /><rect x="5" y="9" width="18" height="12" fill="#f6b45c" /><path d="M5 14h18v3H5z" fill="#e2762c" /><path d="M5 17h18v4H5z" fill="#6b3b1d" /><rect x="26" y="15" width="14" height="18" fill="#38a549" /><path d="M26 15h14v7H26z" fill="#162f1a" /><ellipse cx="33" cy="22" rx="4" ry="3.500" fill="#7ba043" /><rect x="9" y="26" width="15" height="12" fill="#e9efe9" /><path d="M9 26h15v3H9z" fill="#2f8a68" /><circle cx="17" cy="35" r="2.500" fill="#d889b3" /><circle cx="13" cy="34" r="1.800" fill="#6fb06a" /><g fill="#cfe3f2"><circle cx="15" cy="22" r="2" /><circle cx="33" cy="33" r="2" /><circle cx="16" cy="39" r="2" /></g></D> },
  { el: <D><circle cx="23" cy="24" r="21" fill="#1f80df" stroke="#e6e9ee" strokeWidth="2" /><path d="M3 22a20 20 0 0 1 40 0q-20 8-40 0z" fill="#6cb6f5" opacity=".5" /><path d="M25 10L12 36M21 10l13 26M9 29h28" stroke="#fff" strokeWidth="3" /></D> },
  { glow: true, el: <D><g transform="rotate(-7 23 25)"><rect x="4" y="6" width="37" height="37" fill="#8fb2ea" stroke="#fff" strokeWidth="3" strokeDasharray="2 1" /><path d="M16 10l5 2q2 5 1 9l7 7 7 7-5-1-5-1-4 3-7 1 4-4-2-5q-4-9-1-18z" fill="#59442f" /><path d="M29 28l4 2" stroke="#fff" strokeWidth="2" /></g><circle cx="39" cy="9" r="7.500" fill="#e3202c" stroke="#f6a1a5" /><text x="36" y="13" fontFamily="Open Sans" fontSize="11" fontWeight="600" fill="#fff">1</text></D> },
  { el: <D><circle cx="24" cy="3" r="2" stroke="#999" /><circle cx="24" cy="25" r="20" fill="#3d9ee8" stroke="#57595d" strokeWidth="2.500" /><circle cx="24" cy="25" r="18" stroke="#dfe2e6" strokeWidth="2.500" /><path d="M24 9l2 13 10 3-10 3-2 14-3-14-9-3 9-3z" fill="#cfe9fb" /><path d="M34 13l-7 14-5-4z" fill="#e8502b" /><path d="M14 37l8-14 5 4z" fill="#fff" /></D> },
  { el: <D><rect x="1" y="9" width="30" height="30" rx="4" fill="#c7c8ca" stroke="#eee" /><path d="M33 24l12-12v26z" fill="#b7b8ba" stroke="#ddd" /><circle cx="16" cy="24" r="11" fill="#29323e" stroke="#888" /><circle cx="16" cy="24" r="7" fill="#2a65a8" /><circle cx="14" cy="21" r="2.500" fill="#a7cdf3" /></D> },
  { el: <D><path d="M4 6l34-3 4 36-31 6-6-3z" fill="#4a2d16" /><path d="M9 6l30-3 3 35-31 4z" fill="#cfa468" /><path d="M4 6l5 0 3 37-6-1z" fill="#7a5127" /><path d="M12 43l30-5v3l-30 5z" fill="#eee" /><text x="15" y="30" fontFamily="Open Sans" fontSize="19" fill="#f5e8d0">@</text></D> },
  { el: <D><g transform="rotate(-7 23 25)"><rect x="5" y="10" width="38" height="34" rx="2" fill="#f7f7f7" stroke="#bbb" /><path d="M5 8h38v11H5z" fill="#cc3a3d" /><text x="7" y="17" fontFamily="Open Sans" fontSize="6" fontWeight="700" fill="#fff">JUN</text><text x="12" y="37" fontFamily="Liberation Sans" fontSize="19" fontWeight="700" fill="#222">10</text><path d="M11 3v8M34 3v8" stroke="#bbb" strokeWidth="2.500" /></g></D> },
  { el: <D><circle cx="23" cy="24" r="21" fill="#2c79c3" stroke="#dfe3e8" strokeWidth="2" /><ellipse cx="23" cy="14" rx="16" ry="10" fill="#8ec6f0" opacity=".4" /><path d="M18 35V15l14-3v19" stroke="#fff" strokeWidth="2.500" /><ellipse cx="15.500" cy="35" rx="4" ry="3.500" fill="#fff" /><ellipse cx="29" cy="31.500" rx="4" ry="3.500" fill="#fff" /><path d="M18 14l14-3v5l-14 3z" fill="#fff" /></D> },
  { el: <D><rect x="2" y="3" width="43" height="43" rx="4" fill="#f7f8f9" stroke="#fff" /><path d="M8 17l7 12" stroke="#3fa3d8" strokeWidth="5" /><path d="M14.500 30L23 19" stroke="#1c5f94" strokeWidth="5" /><path d="M18 22l7 4" stroke="#2d8bc4" strokeWidth="3" /><path d="M23.500 26l7-8" stroke="#1c5f94" strokeWidth="4" /><path d="M30 17l9 12" stroke="#2d8bc4" strokeWidth="5" /></D> },
  { el: <D><g fill="#8fae24"><path d="M11 14q1-8 12-8t12 8z" /><path d="M17 2l3 6M29 2l-3 6" stroke="#8fae24" /><rect x="10" y="15" width="26" height="24" rx="3" /><rect x="6" y="16" width="5" height="17" rx="2" /><rect x="35" y="16" width="6" height="17" rx="2" /><rect x="15" y="37" width="6" height="9" rx="3" /><rect x="25" y="37" width="6" height="9" rx="3" /></g><rect x="12" y="19" width="21" height="14" rx="2" fill="#122b38" /><circle cx="18" cy="24" r="3.500" stroke="#35a6d8" strokeWidth="2" strokeDasharray="2 1" /><circle cx="28" cy="24" r="3.500" stroke="#35a6d8" strokeWidth="2" strokeDasharray="2 1" /><circle cx="18" cy="10.500" r="1.200" fill="#fff" /><circle cx="28" cy="10.500" r="1.200" fill="#fff" /></D> },
  { el: <D><circle cx="21" cy="24" r="21" fill="#c77be0" /><circle cx="24" cy="23" r="21" fill="#342d6b" /><ellipse cx="25" cy="12" rx="15" ry="9" fill="#7d7bb5" opacity=".7" /><path d="M2 18h44M2 23h44M2 28h44" stroke="#d3d9f2" strokeWidth="1.700" /></D> },
  { glow: true, el: <D><path d="M1 10l40-3 4 30-40 7z" fill="#5ea3e9" stroke="#a9cff8" /><path d="M6 16l32-3M8 36l32-5" stroke="#9fcaf5" /><path d="M21 14L13 37M21 14l13 19M12 30l24-3" stroke="#cfe4fb" strokeWidth="2" /><path d="M28 8l5 2-9 35-7-2z" fill="#2a2a2c" /><path d="M20 6q11-5 18 1l7 0v6l-4-3-4 3-8-3z" fill="#dcdde0" stroke="#777" strokeWidth=".7" /></D> },
  { el: <D><path d="M15 20V4q5 0 10 11z" fill="#3a90cc" /><path d="M0 34q10-8 22-3l-4 7-17-1z" fill="#2f9bd8" /><path d="M30 36l17-2q1 5-6 5z" fill="#2f9bd8" /><path d="M10 26q6-14 22-15 12 2 12 14t-12 15Q16 40 10 26z" fill="#b9d6ea" stroke="#6f9cbd" /><ellipse cx="32" cy="25" rx="9" ry="12" fill="#e9f3fa" stroke="#6a8fab" /><ellipse cx="31" cy="25" rx="4" ry="6" fill="#3e97cd" /></D> },
  { el: <D><rect x="1" y="5" width="43" height="38" fill="#47484b" stroke="#d0d1d3" strokeWidth="2.500" /><circle cx="22.500" cy="25" r="14" stroke="#d9d9db" strokeWidth="5" strokeDasharray="3 1.500" /><circle cx="22.500" cy="25" r="11" fill="#7c7d80" stroke="#e6e6e6" strokeWidth="2" /><path d="M22.500 25V14M22.500 25l10 6M22.500 25l-10 6" stroke="#ddd" strokeWidth="3" /><circle cx="22.500" cy="25" r="3.500" fill="#bbb" stroke="#555" /></D> },
  { el: <D><circle cx="23" cy="25" r="13" fill="#3ea9dd" /><circle cx="20" cy="20" r="7" fill="#c9eefb" opacity=".8" /><g stroke="#1d6f9c" strokeWidth="2"><ellipse cx="23" cy="23" rx="18" ry="5" transform="rotate(-25 23 23)" /><ellipse cx="23" cy="23" rx="7" ry="21" transform="rotate(-12 23 23)" /></g></D> },
  { glow: true, el: <D><circle cx="23" cy="24" r="21" fill="#fbcf2d" /><path d="M4.800 13.500A21 21 0 0 1 41.200 13.500H23L14 29z" fill="#de3b2d" /><path d="M4.800 13.500A21 21 0 0 0 20 44.800L31 29H14z" fill="#4aae4c" /><circle cx="23" cy="24" r="10" fill="#f3f3f3" /><circle cx="23" cy="24" r="7.800" fill="#3d83c8" /></D> },
  { glow: true, el: <D><path d="M5 9l9 31L25 14l5 26L42 9" stroke="#0d6ea5" strokeWidth="8" strokeLinejoin="round" strokeLinecap="round" /><path d="M4.500 8l9 31L24.500 13l5 26L41.500 8" stroke="#27a5dc" strokeWidth="5.500" strokeLinejoin="round" strokeLinecap="round" /></D> },
  { glow: true, el: <D><rect x="2" y="6" width="43" height="37" fill="#c9cacc" /><rect x="5" y="9" width="37" height="31" fill="#1d1e20" /><path d="M5 30q20-6 37-16V9H5z" fill="#38393c" /><text x="7" y="20" fontFamily="Liberation Mono" fontSize="10" fontWeight="700" fill="#fff">&gt;_</text></D> },
  { glow: true, el: <D><path d="M4 6l31-4 3 30-30 5z" fill="#d9c69a" stroke="#fff" strokeWidth="2" /><path d="M2 17l27-13 13 27-28 13z" fill="#7fa8dc" stroke="#fff" strokeWidth="2" /><path d="M13 24q6-7 10 0l5 11-12 5z" fill="#3a2a2a" /><circle cx="17" cy="21" r="4" fill="#2a1c1a" /><circle cx="17.500" cy="22" r="2.800" fill="#c88d6a" /><circle cx="36" cy="30" r="8.500" fill="#b9bbbf" /><circle cx="36" cy="27" r="6.500" fill="#1e1f22" stroke="#ddd" /></D> },
  { glow: true, el: <D><path d="M15 41V27h10q12-1 12-9.500T26 8H13" stroke="#b3300f" strokeWidth="8.500" strokeLinejoin="round" strokeLinecap="round" /><path d="M14.500 41V26.500h10Q36 26 36 17.500T26 7.500H13" stroke="#f0592c" strokeWidth="6" strokeLinejoin="round" strokeLinecap="round" /></D> },
  { w: 25, el: <svg width="20" height="46" viewBox="0 0 20 46"><g fill="#c9cacd" opacity=".8"><rect x="6" y="26" width="8" height="1.500" /><rect x="5" y="30" width="10" height="2" /><rect x="4" y="34.500" width="12" height="2.500" /><rect x="3" y="40" width="14" height="3" /></g></svg> },
  { el: <D><path d="M8 5q0-2 3-1.500h17l10 10V45H8z" fill="#f4f4f5" /><path d="M28 4l10 11h-6q-2-4-4-11z" fill="#b9c4c9" stroke="#8fa0a8" strokeWidth=".7" /></D> },
  { el: <D><path d="M23 0q21 14 21 30T23 47Q2 46 2 30T23 0z" fill="#5595d0" /><path d="M23 0q21 14 21 30T23 47z" fill="#3c78b5" opacity=".6" /><path d="M23 0v48" stroke="#fff" strokeWidth="6" strokeDasharray="2 1.500" /><rect x="15" y="16" width="16" height="12" fill="#fff" stroke="#fff" /><rect x="15" y="30" width="16" height="8" fill="#fff" /><text x="16" y="26.500" fontFamily="Open Sans" fontWeight="700" fontSize="11" fill="#3878b8">B1</text><text x="16.500" y="37" fontFamily="Open Sans" fontWeight="700" fontSize="7" fill="#3878b8">ZIP</text></D> },
  { el: <D><path d="M4 9l6 35q13 4 26 0l6-35z" fill="#6f7175" opacity=".95" /><path d="M5 15h36M6 18.500h34M6 22h34M7 25.500h32M7 29h31M8 32.500h29M9 36h28M10 40h26M9 12l4 32M14.500 12l3 32M20 12l1 33M26 12l-1 33M31.500 12l-3 32M37 12l-4 32" stroke="#cfd0d2" strokeWidth=".8" /><path d="M9 14q2-9 9-7 6-5 11 0 8 0 9 7-15 6-29 0z" fill="#f6f6f6" /><path d="M14 12l5 3M24 8l-2 6M31 10l-4 5" stroke="#c9c9cc" /><ellipse cx="23" cy="9.500" rx="19.500" ry="6" stroke="#d9dadd" strokeWidth="2" /><path d="M10 44q13 4 26 0" stroke="#eee" strokeWidth="2" /></D> },
];

/* ---------- thumbnails ---------- */
const blue = "#3d9cc0";
const loc = <><Inline $c={blue}>LocationClient.OnRemoveGeofencesResultListener</Inline> listener)</>;
const thumbs = [
  { n: 96, shades: [[13, 48, 181, 31], [1, 126, 225, 17]], lines: [
    [13, 30.500, 26, "Geofense."], [13, 41, 115, "onRemoveGeofencesByPendingIntentResult()"],
    [15, 58, 174, <>public void <Inline $b>removeGeofences</Inline> (PendingIntent pendingIntent,</>, 6.500, "#444"],
    [15, 66, 175, loc, 6.800, "#444"],
    [21, 78, 162, <>Removes all geofences associated with the given <Inline $c="#4a9a4a">pendingIntent</Inline>          .</>, 5.300, "#444"],
    [13, 102.500, 110, "onRemoveGeofencesByRequestIdsResult ()"],
    [3, 118, 157, <>public void <Inline $b>removeGeofences</Inline> {"(List<String> geofenceRequestIds,"}</>, 5.700, "#444"],
    [3, 124.500, 147, loc, 5.700, "#444"],
    [8, 134.500, 214, <>Removes geofences by their request IDs. Request ID is specified when you create a <Inline $c={blue}>Geofence</Inline>     by calling</>, 4.500, "#444"],
    [8, 140.500, 49, <><Inline $c={blue}>setRequestId(String)</Inline>              .</>, 3.800, "#444"],
  ] },
  { n: 97, lines: [
    [13, 30.500, 26, "Geofense."], [13, 41, 171, "Como en el caso de añadir las Geofences debemos tener en cuenta:"],
    [24, 54.500, 175, "No podemos eliminar una geofence hasta estar conectados al servicio"], [24, 61, 185, "ServiceLocation, luego es una buena practica encadenar la eliminación de"], [24, 68, 93, "geofences al callback onConnected()"],
    [24, 81.500, 167, "Controlar la posible desconexión del servicio durante el proceso de"], [24, 88.500, 30, "eliminación."],
    [24, 102, 187, "Controlar los posibles errores ocurridos en la eliminación de una geofence."],
    [24, 115, 191, "La llamada a los metodos de eliminación no garantizan el proceso, debemos"], [24, 122, 172, "comprobar que han finalizado correctamente usando sus respectivas"], [24, 128.500, 25, "callbacks."],
  ] },
  { n: 98, lines: [
    [13, 30.500, 78, "Determinar las actualizaciones."],
    [31, 48, 180, "El Reconocimiento de Actividad intenta detectar la actividad física actual"], [31, 54.500, 136, "del usuario, si está caminando, conduciendo o parado."],
    [31, 68, 151, "Sigue un patrón similar al usado en los apartados anteriores."], [31, 81.500, 148, "Basado en el intervalo de actualización que seleccionemos."],
    [31, 95.500, 171, "Nos envía información de la actividad que contiene una o más de las"], [31, 102, 144, "actividades posibles y el nivel de confianza para cada una"],
    [31, 115.500, 135, "Establecemos la solicitud a través de LocationService."],
    [31, 129, 175, "LocationService nos envía actualizaciones del estado de actividad por"], [31, 136, 68, "medio de un PendingIntent."],
  ] },
  { n: 99, on: true, lines: [
    [13, 30.500, 78, "Determinar las actualizaciones."], [32, 48, 149, "Es necesario solicitar un permiso especial antes de solicitar"], [32, 54.500, 72, "actualizaciones de actividad."],
  ] },
];

const L = ({ x, y, w, s, c, children }) => <TextLine $x={x} $y={y} $s={s} $c={c}><Fit w={w}>{children}</Fit></TextLine>;

function ThumbSlide({ t, i }) {
  const y = 15 + i * 185;
  return (
    <>
      <Num $y={y}><Fit w={14.500}>{String(t.n)}</Fit></Num>
      <Thumb $y={y}>
        {t.on && <Ring $sh />}
        <Slide $w={227} $h={171} $sh={t.on ? "none" : "0 1px 5px 1px #3c4250b0"}>
          {(t.shades || []).map((s, k) => <Shade key={k} $x={s[0]} $y={s[1]} $w={s[2]} $h={s[3]} />)}
          <L x={6} y={6.500} w={10} s={3.300}>Tema 6</L>
          <L x={106.500} y={13} w={111} s={10}>Animaciones, Multimedia</L>
          <L x={130} y={25} w={87.500} s={10}>Sensores e Internet</L>
          {t.lines.map((l, k) => <L key={k} x={l[0]} y={l[1]} w={l[2]} s={l[4] ?? 5.600} c={l[5] ?? "#111"}>{l[3]}</L>)}
          <BotSpot $x={208} $y={149}><Bot w={14} /></BotSpot>
          {t.on && <Ring />}
        </Slide>
      </Thumb>
    </>
  );
}

const tabs = [["Temas", 69, 37], ["Tablas", 69, 37], ["Gráficos", 78, 46], ["SmartArt", 82, 50], ["Transiciones", 104, 72], ["Animaciones", 104, 72], ["Presentación con diapositivas", 200, 168], ["Revisar", 73, 41]];
const BigButton = ({ w, icon, label, lw }) => (
  <Big $w={w}><BigIcon>{icon}<Tri /></BigIcon><BigLabel><Fit w={lw}>{label}</Fit></BigLabel></Big>
);

export default function App() {
  return (
    <Screen>
      <Global />
      <MenuBar>
        <MenuGroup>
          <Apple />
          <MenuItem $bold $ml={18.500}><Fit w={56}>Chrome</Fit></MenuItem>
          <MenuItem $ml={19}><Fit w={52}>Archivo</Fit></MenuItem>
          <MenuItem $ml={18}><Fit w={39.500}>Editar</Fit></MenuItem>
          <MenuItem $ml={18.500}><Fit w={23}>Ver</Fit></MenuItem>
          <MenuItem $ml={18}><Fit w={57}>Historial</Fit></MenuItem>
          <MenuItem $ml={18}><Fit w={78}>Marcadores</Fit></MenuItem>
          <MenuItem $ml={19}><Fit w={55}>Ventana</Fit></MenuItem>
          <MenuItem $ml={19}><Fit w={42.500}>Ayuda</Fit></MenuItem>
        </MenuGroup>
        <MenuGroup>
          <Dropbox />
          <MenuItem $ic $ml={9}><Overlap /></MenuItem>
          <MenuItem $ic $ml={13}><ClockIc /></MenuItem>
          <MenuItem $ic $ml={15}><Bt /></MenuItem>
          <MenuItem $ic $ml={12}><Wifi /></MenuItem>
          <MenuItem $ic $ml={10}><Sound /></MenuItem>
          <MenuItem $ic $ml={18}><Batt /></MenuItem>
          <MenuItem $ml={13}><Fit w={66}>lun 11:27</Fit></MenuItem>
          <MenuItem $bold $ml={15}><Fit w={43}>centic</Fit></MenuItem>
          <MenuItem $ic $ml={22}><Mag /></MenuItem>
        </MenuGroup>
      </MenuBar>

      <Window>
        <Header>
          <TitleRow>
            <Lights><Light $dot /><Light /><Light /></Lights>
            <Title><PptFile /><Fit w={76}>Tema6.pptx</Fit></Title>
          </TitleRow>
          <ToolRow>
            <Tools>
              <Cell $w={29}><TNew /></Cell><Cell $w={30}><TGrid /></Cell><Cell $w={29}><TFolder /></Cell><Cell $w={29}><TSave /></Cell><Cell $w={29}><TPrint /></Cell>
              <Cell $w={6} $o={1}><Dots /></Cell>
              <Cell $w={27}><TCut /></Cell><Cell $w={30}><TCopy /></Cell><Cell $w={30}><TPaste /></Cell><Cell $w={28} $o={0.75}><TBrush /></Cell>
              <Cell $w={8} $o={1}><Dots /></Cell>
              <Cell $w={26} $o={0.75}><Arc c="#f3cf8c" d="#bd8428" /></Cell><Cell $w={10} $o={0.8}><Tri w={5} /></Cell>
              <Cell $w={30} $o={0.75}><Arc flip c="#a3cbe4" d="#3d7aa5" /></Cell><Cell $w={8} $o={0.8}><Tri w={5} /></Cell>
              <Cell $w={8} $o={1}><Dots /></Cell>
              <Cell $w={26}><TForm /></Cell><Cell $w={32}><TMedia /></Cell>
              <Cell $w={5} $o={1}><Dots /></Cell>
              <Zoom><Fit w={29}>118%</Fit><ZoomArrow><Tri c="#999" w={5} /></ZoomArrow></Zoom>
              <Cell $w={14} $o={1}><Dots /></Cell>
              <Cell $w={20} $o={0.65}><S w={19} h={19}><circle cx="9.500" cy="9.500" r="8.800" fill="#f0eaf6" stroke="#999" /><circle cx="9.500" cy="9.500" r="6.800" fill="#9a7fc8" /><text x="6.500" y="14" fontFamily="Open Sans" fontSize="12" fontWeight="700" fill="#fff">?</text></S></Cell>
            </Tools>
            <Search><Mag s={13} c="#7d7d7d" sw={2.300} /><Tri c="#7d7d7d" /><SearchInner><Fit w={135}>Buscar en presentación</Fit></SearchInner></Search>
          </ToolRow>
        </Header>

        <TabRow>
          <Tabs>
            <Tab $w={78} $kind="home"><svg width="10" height="10" viewBox="0 0 10 10" fill="#6f6c6a"><path d="M5 0L0 5h1.500v5h2.500V7h2v3h2.500V5H10z" /></svg><Fit w={31}>Inicio</Fit></Tab>
            <Tab $w={87.500} $kind="format"><Fit w={47}>Formato</Fit></Tab>
            {tabs.map(([t, w, tw]) => <Tab key={t} $w={w}><Fit w={tw}>{t}</Fit></Tab>)}
          </Tabs>
          <TabTools>
            <S w={13} h={8}><path d="M1 7l5.500-5L12 7" stroke="#8a8583" strokeWidth="2" /></S>
            <S w={29} h={12}><circle cx="15" cy="6" r="3.200" stroke="#8a8583" strokeWidth="1.800" /><path d="M15 0v12M9 6h12M10.800 1.800l8.400 8.400M19.200 1.800l-8.400 8.400" stroke="#8a8583" strokeWidth="1.600" /><circle cx="15" cy="6" r="2" fill="#e9dfdb" /><path d="M23 4h6l-3 4z" fill="#8a8583" /></S>
          </TabTools>
        </TabRow>

        <RibbonWrap>
          <Ribbon>
            <Group $w={187}>
              <GroupHead><Fit w={53}>Diapositivas</Fit></GroupHead>
              <GroupBody>
                <BigButton w={95} icon={<NewSlide />} label="Nueva diapositiva" lw={85} />
                <Side $pl={9}>
                  <SideRow $w={69}><LayoutIc /><SideText><Fit w={34}>Diseño</Fit></SideText><Tri /></SideRow>
                  <SideRow $w={69}><SectionIc /><SideText><Fit w={37}>Sección</Fit></SideText><Tri /></SideRow>
                </Side>
              </GroupBody>
            </Group>

            <Group $w={338}>
              <GroupHead><Fit w={30}>Fuente</Fit></GroupHead>
              <GroupBody $rows $pl={5}>
                <Row>
                  <Combo $w={182} $mr={2}><Fit w={25}>Arial</Fit><ComboArrow><Tri /></ComboArrow></Combo>
                  <Combo $w={48} $mr={5}><Fit w={14}>18</Fit><ComboArrow><Tri /></ComboArrow></Combo>
                  <Btns $mr={5}><Btn $first $w={27}><Glyph $s={16}>A</Glyph><Tri up c="#2a72cc" w={7} /></Btn><Btn $w={27}><Glyph $s={16}>A</Glyph><Tri c="#2a72cc" w={7} /></Btn></Btns>
                  <Btns><Btn $first $w={26}><S w={20} h={18}><text x="0" y="9" fontFamily="Liberation Serif" fontWeight="700" fontSize="10.500" fill="#222">Ab</text><rect x="5" y="8" width="13" height="6.500" rx="3" transform="rotate(-45 11.500 11)" fill="#f0f3fa" stroke="#55608a" strokeWidth="1.200" /></S></Btn></Btns>
                </Row>
                <Row>
                  <Btns>
                    <Btn $first $w={27}><Glyph $b>N</Glyph></Btn><Btn $w={28}><Glyph $i $b>C</Glyph></Btn><Btn $w={28}><Glyph $d="underline" $s={15}>S</Glyph></Btn>
                    <Btn $w={27}><Struck><Fit w={20}>ABC</Fit></Struck></Btn><Btn $w={28}><Glyph $s={16}>A</Glyph><Script $up>2</Script></Btn><Btn $w={27}><Glyph $s={16}>A</Glyph><Script>2</Script></Btn>
                  </Btns>
                  <Btns><Btn $first $w={36}><AV /><Tri /></Btn><Btn $w={37}><Aa /><Tri /></Btn></Btns>
                  <Btns>
                    <Btn $first $w={27}><S w={19} h={19}><text x="3" y="12.500" fontFamily="Liberation Serif" fontWeight="700" fontSize="16" fill="#333">A</text><rect x="0" y="14.500" width="18" height="4" fill="#f00" /></S></Btn>
                    <Btn $w={10}><Tri c="#666" w={5} /></Btn>
                    <Btn $w={37}><S w={18} h={18}><text x="3" y="15" fontFamily="Open Sans" fontWeight="700" fontSize="17" fill="#fff" stroke="#2ec4dc" strokeWidth="3" paintOrder="stroke">A</text></S><Tri /></Btn>
                  </Btns>
                </Row>
              </GroupBody>
            </Group>

            <Group $w={233}>
              <GroupHead><Fit w={32}>Párrafo</Fit></GroupHead>
              <GroupBody $rows $pl={5}>
                <Row>
                  <Btns><Btn $first $w={26}><Bullets /></Btn><Btn $w={11}><Tri w={5} /></Btn><Btn $w={27}><Bullets num /></Btn><Btn $w={10}><Tri w={5} /></Btn></Btns>
                  <Btns><Btn $first $w={27} $dim><Indent out /></Btn><Btn $w={27}><Indent /></Btn></Btns>
                  <Btns $mr={5}><Btn $first $w={36}><Spacing /><Tri /></Btn></Btns>
                  <Btns><Btn $first $w={36}><Columns /><Tri /></Btn></Btns>
                </Row>
                <Row>
                  <Btns $mr={5}><Btn $first $on $w={27}><Align a="l" /></Btn><Btn $w={28}><Align a="c" /></Btn><Btn $w={27}><Align a="r" /></Btn><Btn $w={28}><Align a="j" /></Btn><Btn $w={28}><Distrib /></Btn></Btns>
                  <Btns><Btn $first $w={37}><TextDir /><Tri /></Btn><Btn $w={37}><AlignBox /><Tri /></Btn></Btns>
                </Row>
              </GroupBody>
            </Group>

            <Group $w={245}>
              <GroupHead><Fit w={34}>Insertar</Fit></GroupHead>
              <GroupBody>
                <BigButton w={55} icon={<TextIc />} label="Texto" lw={29} />
                <BigButton w={56} icon={<ImageIc />} label="Imagen" lw={37} />
                <BigButton w={55} icon={<ShapeIc />} label="Forma" lw={31} />
                <BigButton w={68} icon={<MediaIc />} label="Multimedia" lw={54} />
              </GroupBody>
            </Group>

            <Group $w={254}>
              <GroupHead><Fit w={37}>Formato</Fit></GroupHead>
              <GroupBody $pl={10}>
                <BigButton w={61} icon={<ArrangeIc />} label="Organizar" lw={49} />
                <BigButton w={90} icon={<StylesIc />} label="Estilos rápidos" lw={71} />
                <Side $pl={6}>
                  <SideRow $w={67}><FillIc /><SideText $pl={3}><Fit w={33}>Relle...</Fit></SideText><Tri /></SideRow>
                  <SideRow $w={67}><LineIc /><SideText $pl={5}><Fit w={26}>Línea</Fit></SideText><Tri /></SideRow>
                </Side>
              </GroupBody>
            </Group>

            <Group $w={142}>
              <GroupHead><Fit w={129}>Presentación con diapositivas</Fit></GroupHead>
              <GroupBody><BigButton w={141} icon={<PlayIc />} label="Reproducir" lw={54} /></GroupBody>
            </Group>
          </Ribbon>
        </RibbonWrap>

        <Work>
          <Left>
            <LeftHead>
              <Seg><SegItem $on><Fit w={28}>Diap.</Fit></SegItem><SegItem><Fit w={48}>Esquema</Fit></SegItem></Seg>
              <S w={14} h={14}><circle cx="7" cy="7" r="6.800" fill="#8c8c8c" /><path d="M4 4l6 6M10 4l-6 6" stroke="#fff" strokeWidth="2" /></S>
            </LeftHead>
            <LeftBody>
              <Strip>
                <Thumb $y={-169}><Slide $w={227} $h={170} $sh="0 1px 5px 1px #3c4250b0" /></Thumb>
                {thumbs.map((t, i) => <ThumbSlide key={t.n} t={t} i={i} />)}
              </Strip>
              <Track><TrackThumb $h={26} /></Track>
            </LeftBody>
          </Left>
          <VSplit><Dot /><Dot /><Dot /></VSplit>
          <Right>
            <StageRow>
              <Stage>
                <Slide $w={851} $h={637} $sh="0 0 0 1px #8c93a0, 1px 1px 3px 1px #5b6472b0">
                  <L x={18.500} y={21} w={38.500} s={12}>Tema 6</L>
                  <L x={398.500} y={43} w={419} s={37.500}>Animaciones, Multimedia</L>
                  <L x={489} y={88} w={328.500} s={37.500}>Sensores e Internet</L>
                  <L x={45.500} y={110} w={294} s={21.500}>Determinar las actualizaciones.</L>
                  <L x={118.500} y={177} w={561} s={21.500}>Es necesario solicitar un permiso especial antes de solicitar</L>
                  <L x={118.500} y={202} w={270} s={21.500}>actualizaciones de actividad.</L>
                  <Selection>
                    <Stem />
                    <Handle $round $x={340} $y={-30} $c="#9bd8b0" $b="#3d8a58" />
                    <Handle $round $x={-6} $y={-5} /><Handle $x={340} $y={-5} /><Handle $round $x={685} $y={-5} />
                    <Handle $x={-6} $y={26} /><Handle $x={685} $y={26} />
                    <Handle $round $x={-6} $y={56} /><Handle $x={340} $y={56} /><Handle $round $x={685} $y={56} />
                  </Selection>
                  <BotSpot $x={783} $y={557}><Bot w={52} /></BotSpot>
                </Slide>
              </Stage>
              <RightTrack>
                <TrackThumb $h={18} $c="#b4b4b4" />
                <Pagers><S w={8} h={30} fill="#222"><path d="M1 7.500L4 2l3 5.500zM1 13L4 8l3 5.500zM1 18l3 5 3-5zM1 24l3 5 3-5z" /></S></Pagers>
              </RightTrack>
            </StageRow>
            <HSplit><Dot /><Dot /><Dot /></HSplit>
            <Notes><Fit w={154}>Haga clic para agregar notas</Fit></Notes>
          </Right>
        </Work>

        <Status>
          <Views>
            <ViewSet>
              <View $on><S w={16} h={14}><rect x=".7" y=".7" width="14.600" height="12.600" rx="1" stroke="#a9d4f5" strokeWidth="1.300" /><path d="M4.500 1v12M4.500 9.500H15" stroke="#a9d4f5" strokeWidth="1.300" /></S></View>
              <View><S w={14} h={14} stroke="#999" strokeWidth="1.300"><rect x="1" y="1" width="4" height="4" /><rect x="9" y="1" width="4" height="4" /><rect x="1" y="9" width="4" height="4" /><rect x="9" y="9" width="4" height="4" /></S></View>
              <View><S w={16} h={14} stroke="#888" strokeWidth="1.300"><path d="M0 1h16M2 1v8h12V1M8 9v4M4 13h8" /><path d="M5 5h6" strokeWidth="2" /></S></View>
            </ViewSet>
          </Views>
          <Fill />
          <Count><Fit w={48}>99 de 99</Fit></Count>
          <ZoomArea>
            <Fit w={28}>118%</Fit>
            <Slider><Knob /></Slider>
            <FullBtn><S w={13} h={12}><path d="M1 1l3 3M12 1L9 4M1 11l3-3M12 11L9 8" stroke="#444" strokeWidth="1.400" /><rect x="3.800" y="3.500" width="5.500" height="5" fill="#444" /><path d="M0 0h3L0 3zM13 0h-3l3 3zM0 12h3L0 9zM13 12h-3l3-3z" fill="#444" /></S></FullBtn>
            <Grip><S w={11} h={11} stroke="#888"><path d="M0 11L11 0M4 11l7-7M8 11l3-3" /></S></Grip>
          </ZoomArea>
        </Status>
        <EdgeShadow />
      </Window>

      <Desktop>
        <Backdrop><Sky /></Backdrop>
        <Dock>
          {dock.map((d, i) => <DockItem key={i} $w={d.w}>{d.el}{d.glow && <Glow />}</DockItem>)}
        </Dock>
      </Desktop>
    </Screen>
  );
}
